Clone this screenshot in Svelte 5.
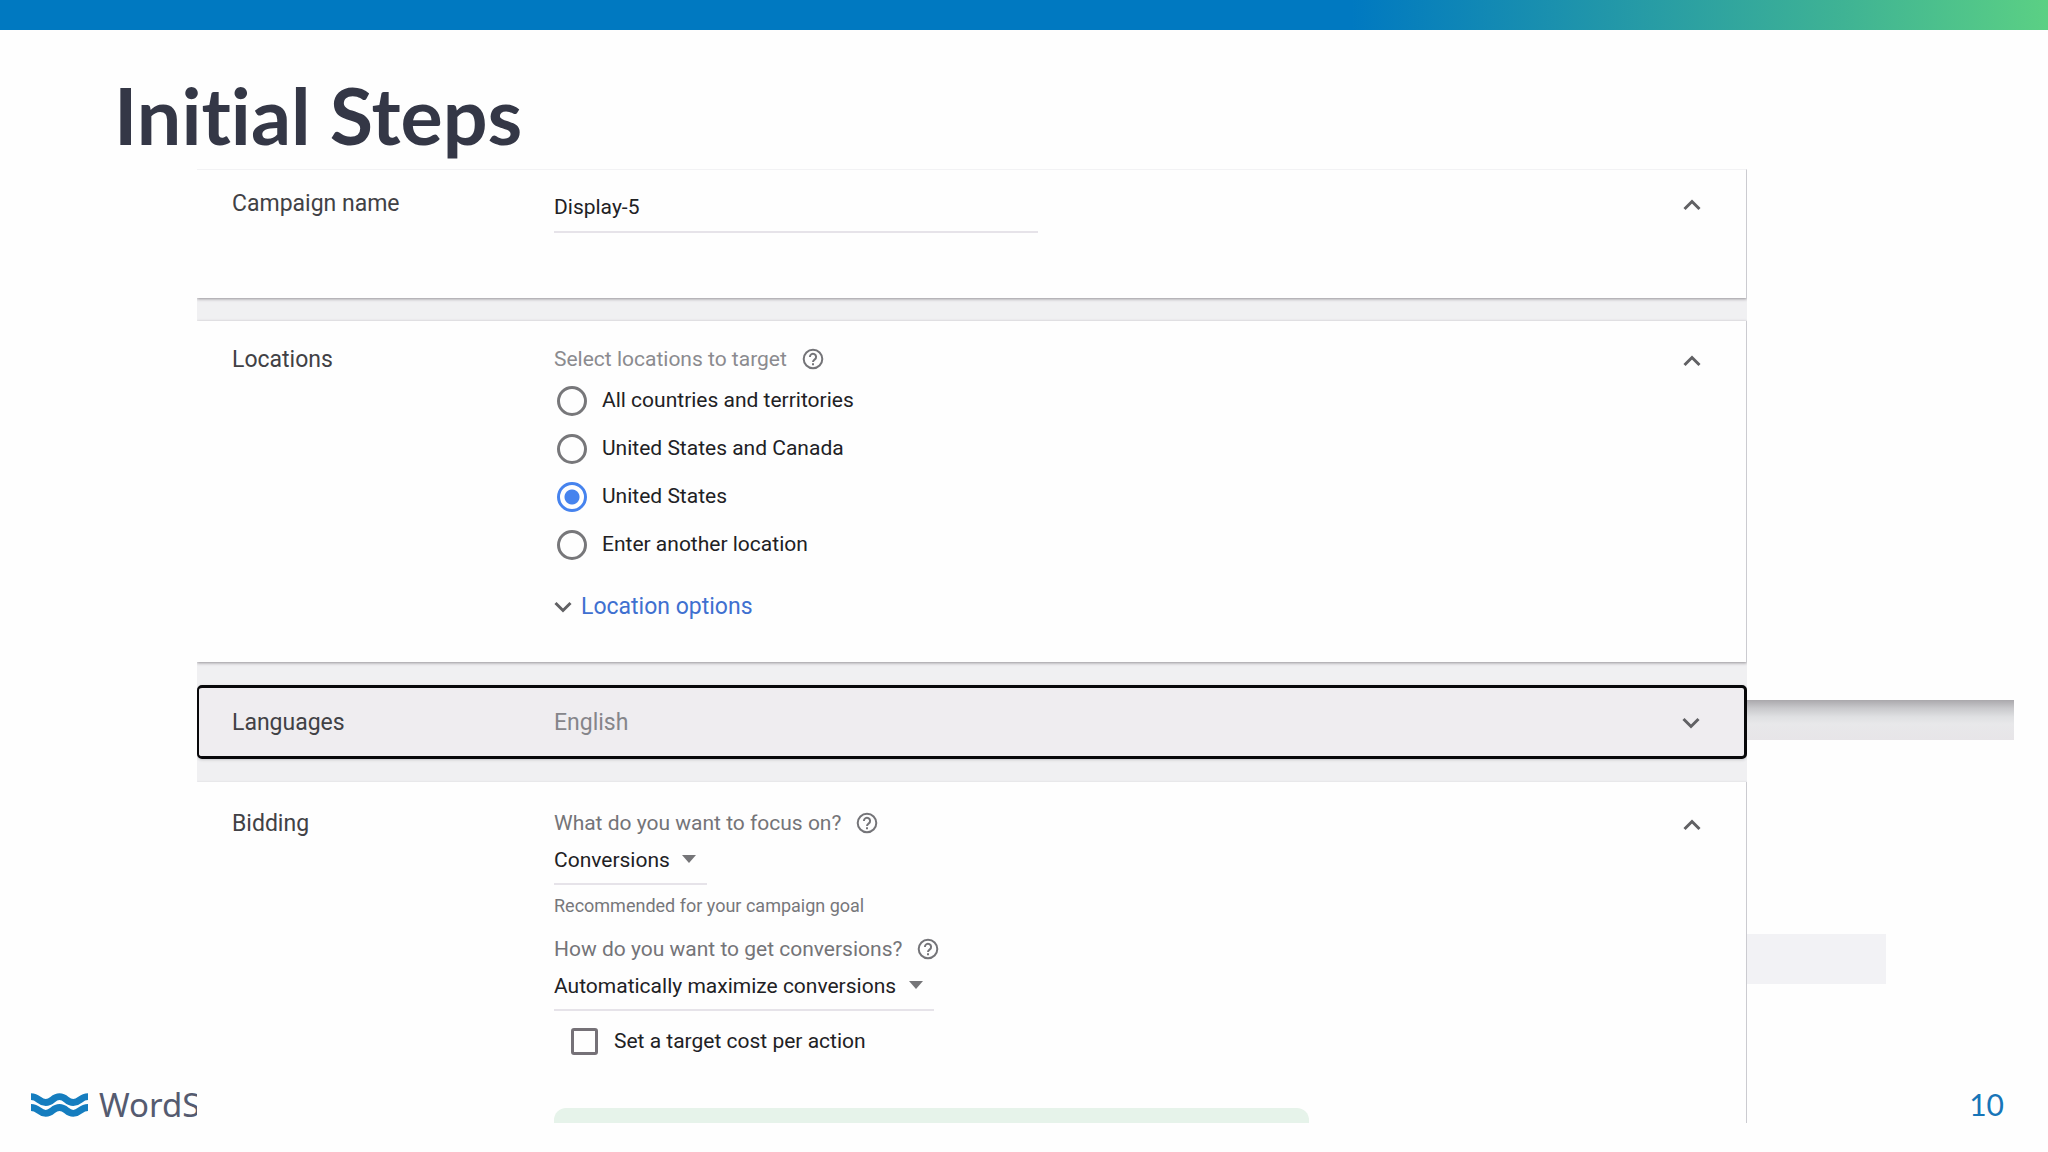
<script>
  let campaignName = $state('Display-5');
  let location = $state('United States');
  let focus = $state('Conversions');
  let strategy = $state('Automatically maximize conversions');
  let targetCost = $state(false);

  const locations = [
    'All countries and territories',
    'United States and Canada',
    'United States',
    'Enter another location'
  ];
</script>

{#snippet chevron(direction)}
  <svg class="chevron" class:down={direction === 'down'} viewBox="0 0 18 12" aria-hidden="true">
    <path d="M1.5 10 9 2.5 16.5 10" />
  </svg>
{/snippet}

{#snippet help()}
  <button class="help" type="button" aria-label="Help">
    <svg viewBox="0 0 22 22" aria-hidden="true">
      <circle cx="11" cy="11" r="9.3" />
      <path d="M7.9 8.9a3.1 3.1 0 1 1 4.9 2.5c-1.1.8-1.8 1.3-1.8 2.7" />
      <path d="M11 15.3v1.9" />
    </svg>
  </button>
{/snippet}

{#snippet arrow()}
  <svg class="arrow" viewBox="0 0 14 8" aria-hidden="true"><path d="M0 0h14L7 8z" /></svg>
{/snippet}

<div class="slide">
  <div class="stripe"></div>
  <h1>Initial Steps</h1>

  <div class="body">
    <div class="brand">
      <svg class="waves" viewBox="0 0 58 24" aria-hidden="true">
        <path d="M0 3.500C8 3.500 8 9.500 15 9.500S22 3.500 29 3.500 36 9.500 43 9.500 50 3.500 58 3.500" />
        <path d="M0 14.500C8 14.500 8 20.500 15 20.500S22 14.500 29 14.500 36 20.500 43 20.500 50 14.500 58 14.500" />
      </svg>
      <span>WordS</span>
    </div>

    <main>
      <section class="first">
        <h2><label for="campaign">Campaign name</label></h2>
        <div class="content">
          <input id="campaign" class="name" type="text" bind:value={campaignName} />
        </div>
        <button class="toggle" type="button" aria-label="Collapse campaign name">{@render chevron('up')}</button>
      </section>

      <section class="places">
        <h2>Locations</h2>
        <div class="content">
          <div class="question light"><span>Select locations to target</span>{@render help()}</div>
          <div class="options">
            {#each locations as place}
              <label class="option">
                <input type="radio" name="location" value={place} bind:group={location} />
                <span>{place}</span>
              </label>
            {/each}
          </div>
          <button class="more" type="button">{@render chevron('down')}<span>Location options</span></button>
        </div>
        <button class="toggle" type="button" aria-label="Collapse locations">{@render chevron('up')}</button>
      </section>

      <section class="focused">
        <h2>Languages</h2>
        <div class="content value">English</div>
        <button class="toggle" type="button" aria-label="Expand languages">{@render chevron('down')}</button>
      </section>

      <section class="bidding">
        <h2>Bidding</h2>
        <div class="content">
          <div class="question"><label for="focus">What do you want to focus on?</label>{@render help()}</div>
          <div class="select">
            <select id="focus" bind:value={focus}><option>Conversions</option></select>
            {@render arrow()}
          </div>
          <p class="hint">Recommended for your campaign goal</p>
          <div class="question"><label for="strategy">How do you want to get conversions?</label>{@render help()}</div>
          <div class="select">
            <select id="strategy" bind:value={strategy}><option>Automatically maximize conversions</option></select>
            {@render arrow()}
          </div>
          <label class="check">
            <input type="checkbox" bind:checked={targetCost} />
            <span>Set a target cost per action</span>
          </label>
          <div class="notice"></div>
        </div>
        <button class="toggle" type="button" aria-label="Collapse bidding">{@render chevron('up')}</button>
      </section>
    </main>

    <aside>
      <div class="band"></div>
      <div class="block"></div>
      <span class="number">10</span>
    </aside>
  </div>
</div>

<style>
  :global(body) {
    background: #fefefe;
  }

  .slide {
    min-height: 100vh;
    display: flex;
    flex-direction: column;
    font-family: Roboto, "Liberation Sans", sans-serif;
    font-size: 21px;
    line-height: 28px;
    color: #212124;
    background: #fefefe;
  }

  .stripe {
    height: 30px;
    background: linear-gradient(90deg, #0079c1 66%, #2398a8 79%, #3fb394 90%, #5bd084 100%);
  }

  h1 {
    margin: 0;
    padding: 37px 114px 6px;
    font-family: Lato, "Open Sans", sans-serif;
    font-size: 79px;
    font-weight: 700;
    font-variant-ligatures: none;
    line-height: 96px;
    color: #343746;
  }

  .body {
    flex: 1;
    display: grid;
    grid-template-columns: 197px minmax(0, 1fr) 301px;
  }

  .brand {
    display: flex;
    align-items: center;
    align-self: end;
    gap: 11px;
    padding: 0 0 29px 31px;
    overflow: hidden;
    font-family: "Noto Sans", sans-serif;
    font-size: 33px;
    line-height: 36px;
    color: #555b70;
  }

  .waves {
    flex: none;
    width: 57px;
    height: 24px;
    fill: none;
    stroke: #157dbf;
    stroke-width: 7;
  }

  main {
    display: flex;
    flex-direction: column;
    gap: 23px;
    margin-bottom: 29px;
    background: #f0f0f2;
    overflow: hidden;
  }

  section {
    display: grid;
    grid-template-columns: 322px minmax(0, 1fr) 18px;
    align-items: start;
    padding: 24px 45px 41px 35px;
    background: #fefefe;
    border-right: 1px solid #cbcbd0;
    box-shadow: 0 1px 3px #949096;
  }

  .first {
    padding-top: 19px;
    padding-bottom: 65px;
    border-top: 1px solid #f2f2f4;
  }

  .bidding {
    flex: 1;
    padding-top: 27px;
    padding-bottom: 0;
    box-shadow: 0 0 2px #d5d5d9;
  }

  .focused {
    align-items: center;
    padding: 19px 44px 17px 33px;
    background: #efedf0;
    border: 3px solid #08080a;
    border-left-width: 2px;
    border-radius: 5px;
    box-shadow: 0 1px 3px #c8c8cc;
  }

  h2 {
    margin: 0;
    font-size: 23px;
    font-weight: 400;
    line-height: 30px;
    color: #414145;
  }

  button {
    padding: 0;
    border: 0;
    background: none;
    font: inherit;
    color: inherit;
    cursor: pointer;
  }

  .chevron {
    display: block;
    width: 18px;
    height: 12px;
    fill: none;
    stroke: #616164;
    stroke-width: 3;
  }

  .chevron.down {
    transform: rotate(180deg);
  }

  .toggle {
    display: flex;
    align-items: center;
    height: 32px;
  }

  .name {
    display: block;
    box-sizing: border-box;
    width: 484px;
    max-width: 100%;
    height: 44px;
    padding: 4px 0 10px;
    border: 0;
    border-bottom: 2px solid #e6e3e9;
    background: none;
    font: inherit;
    color: inherit;
  }

  .value {
    font-size: 23px;
    line-height: 30px;
    color: #85858a;
  }

  .question {
    display: flex;
    align-items: center;
    gap: 15px;
    color: #747478;
  }

  .light {
    color: #8b8b8f;
  }

  .help {
    display: flex;
    color: #747478;
  }

  .help svg {
    width: 22px;
    height: 22px;
    fill: none;
    stroke: currentColor;
    stroke-width: 2;
  }

  .options {
    margin-top: 4px;
  }

  .option {
    display: flex;
    align-items: center;
    gap: 15px;
    height: 48px;
    padding-left: 3px;
  }

  .option span {
    padding-bottom: 2px;
  }

  .option input {
    appearance: none;
    box-sizing: border-box;
    width: 30px;
    height: 30px;
    margin: 0;
    border: 3px solid #77777a;
    border-radius: 50%;
  }

  .option input:checked {
    border-color: #4683ee;
    background: radial-gradient(circle, #4683ee 7px, transparent 8px);
  }

  .more {
    display: flex;
    align-items: center;
    gap: 9px;
    margin-top: 24px;
    font-size: 23px;
    color: #3f70d0;
  }

  .select {
    display: flex;
    width: fit-content;
    align-items: flex-start;
    gap: 12px;
    margin-top: 9px;
    padding: 0 11px 9px 0;
    border-bottom: 2px solid #e6e3e9;
  }

  select {
    appearance: none;
    padding: 0;
    border: 0;
    background: none;
    font: inherit;
    color: inherit;
  }

  .arrow {
    width: 14px;
    height: 8px;
    margin-top: 9px;
    fill: #757578;
  }

  .hint {
    margin: 9px 0 17px;
    font-size: 18px;
    line-height: 24px;
    color: #77777b;
  }

  .check {
    display: flex;
    align-items: center;
    gap: 16px;
    margin-top: 16px;
    padding-left: 17px;
  }

  .check input {
    appearance: none;
    box-sizing: border-box;
    width: 27px;
    height: 27px;
    margin: 0;
    border: 3px solid #757177;
    border-radius: 3px;
  }

  .notice {
    width: 755px;
    max-width: 100%;
    height: 15px;
    margin-top: 53px;
    border-radius: 12px 12px 0 0;
    background: #e6f3ea;
  }

  aside {
    display: flex;
    flex-direction: column;
    padding-top: 531px;
  }

  .band {
    width: 267px;
    height: 40px;
    background: linear-gradient(#aaa8ac, #c8c8cb 20%, #dfe0e2 42%, #e8e8ea 60%, #e7e5e8);
  }

  .block {
    width: 139px;
    height: 50px;
    margin-top: 194px;
    background: #f2f2f5;
  }

  .number {
    margin-top: auto;
    padding: 0 44px 30px 0;
    text-align: right;
    font-family: Lato, "Open Sans", sans-serif;
    font-size: 30px;
    line-height: 36px;
    color: #1775b8;
  }
</style>
